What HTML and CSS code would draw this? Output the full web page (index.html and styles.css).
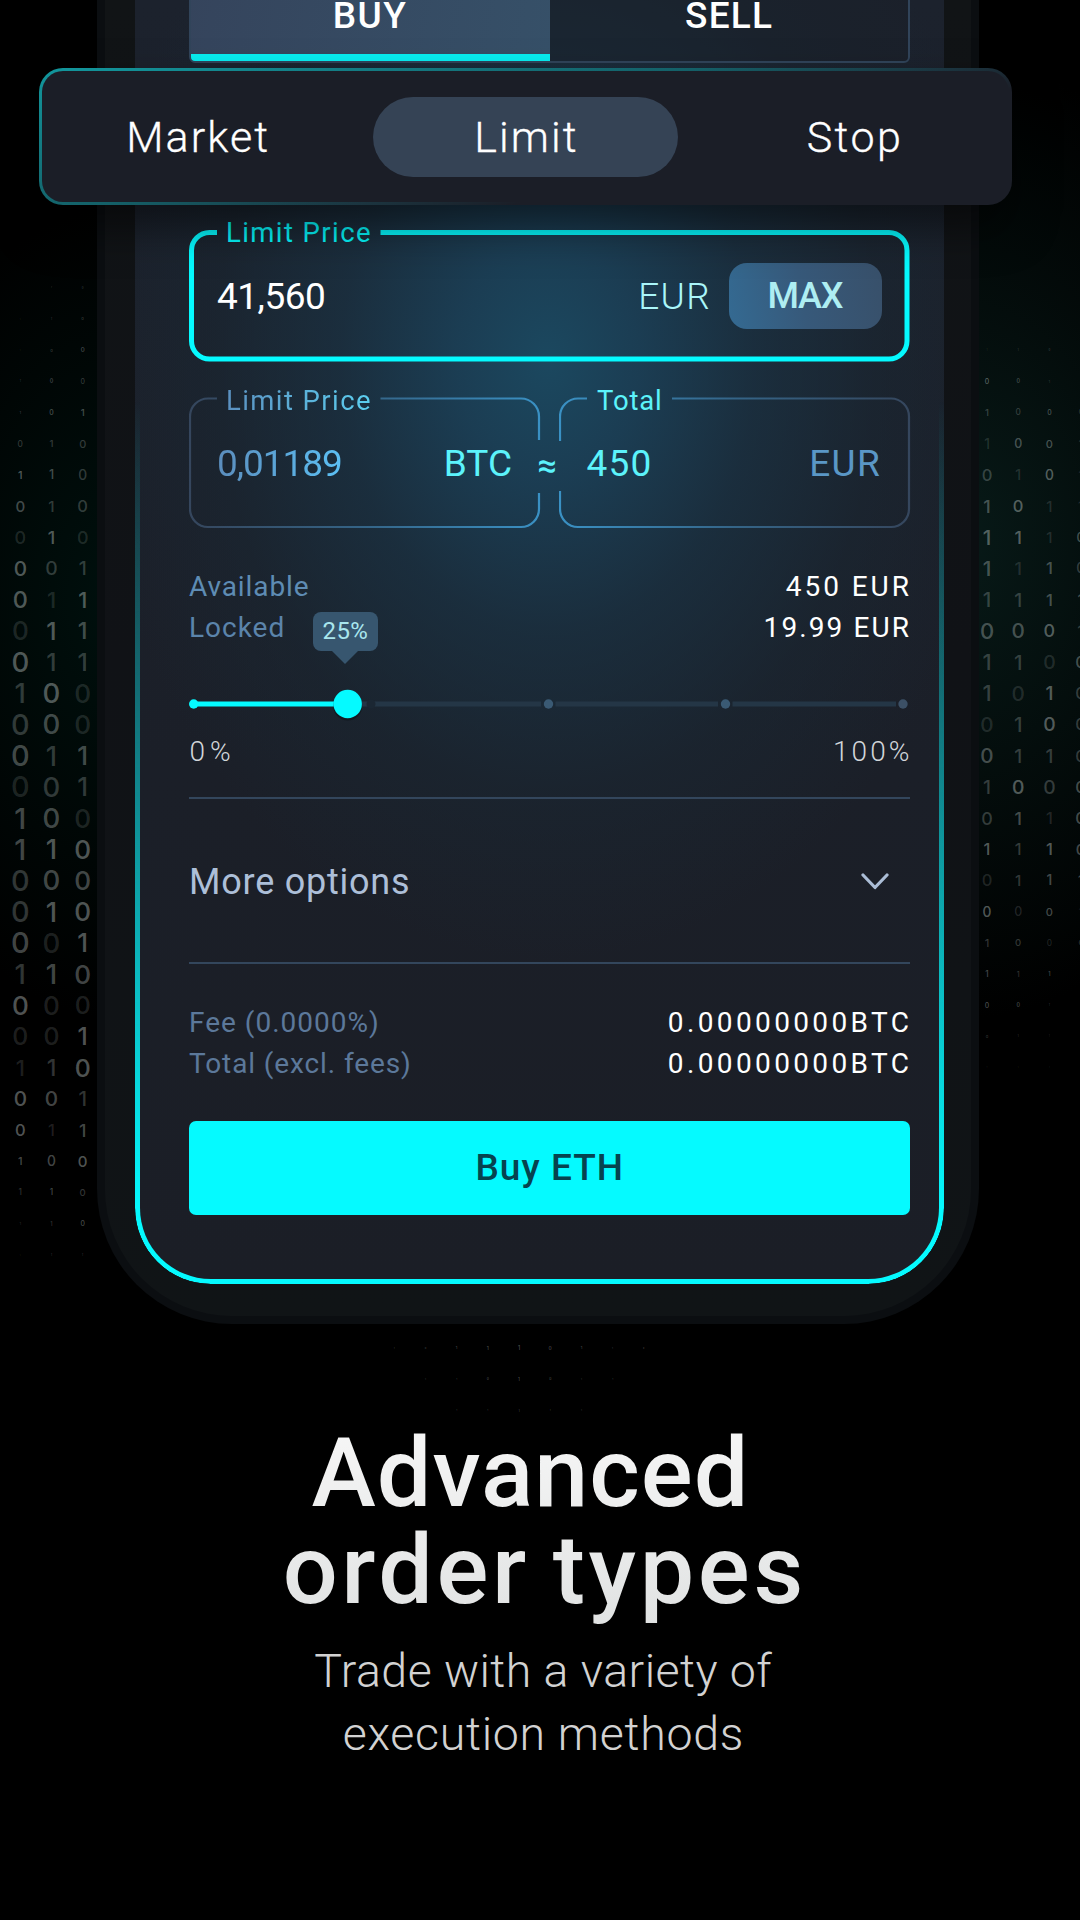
FILE: index.html
```html
<!DOCTYPE html>
<html lang="en">
<head>
<meta charset="utf-8">
<title>Advanced order types</title>
<link rel="stylesheet" href="styles.css">
</head>
<body>
<main class="page">
  <svg class="rain" id="rain" width="1080" height="1920" viewBox="0 0 1080 1920" aria-hidden="true"></svg>

  <section class="phone">
    <div class="bezel">
      <div class="screen">
        <div class="tabs">
          <div class="tab tab-active"><span class="t buy">BUY</span></div>
          <div class="tab"><span class="t sell">SELL</span></div>
        </div>

        <div class="field price">
          <svg class="outline" width="721" height="132" viewBox="0 0 721 132" aria-hidden="true">
            <path d="M28 2.5H20.5A18 18 0 0 0 2.500 20.500V111A18 18 0 0 0 20.500 129H700A18 18 0 0 0 718 111V20.500A18 18 0 0 0 700 2.500H191.500" fill="none" stroke="#05faff" stroke-width="5"/>
          </svg>
          <span class="label t cyan">Limit Price</span>
          <span class="value t white v-price">41,560</span>
          <span class="unit t u-price">EUR</span>
          <button class="max"><span class="t m">MAX</span></button>
        </div>

        <div class="pair">
          <div class="field">
            <svg class="outline" width="352" height="132" viewBox="0 0 352 132" aria-hidden="true">
              <defs><linearGradient id="ga" gradientUnits="userSpaceOnUse" x1="0" y1="0" x2="352" y2="0"><stop offset="0" stop-color="#35465d"/><stop offset=".5" stop-color="#346487"/><stop offset="1" stop-color="#3a91c4"/></linearGradient></defs>
              <path d="M28 1.500H19A18 18 0 0 0 1 19.500V112A18 18 0 0 0 19 130H332A18 18 0 0 0 350 112V96M350 43V19.500A18 18 0 0 0 332 1.500H191.500" fill="none" stroke="url(#ga)" stroke-width="2.200"/>
            </svg>
            <span class="label t fade-label">Limit Price</span>
            <span class="value t fade-value v-amount">0,01189</span>
            <span class="unit t bright btc">BTC</span>
          </div>
          <span class="approx">≈</span>
          <div class="field">
            <svg class="outline" width="352" height="132" viewBox="0 0 352 132" aria-hidden="true">
              <defs><linearGradient id="gb" gradientUnits="userSpaceOnUse" x1="0" y1="0" x2="352" y2="0"><stop offset="0" stop-color="#3a91c4"/><stop offset=".5" stop-color="#346487"/><stop offset="1" stop-color="#35465d"/></linearGradient></defs>
              <path d="M28 1.500H19A18 18 0 0 0 1 19.500V44M1 94V112A18 18 0 0 0 19 130H332A18 18 0 0 0 350 112V19.500A18 18 0 0 0 332 1.500H113" fill="none" stroke="url(#gb)" stroke-width="2.200"/>
            </svg>
            <span class="label t total bright">Total</span>
            <span class="value t bright v-total">450</span>
            <span class="unit t dim eur">EUR</span>
          </div>
        </div>

        <div class="rows balance">
          <div class="row"><span class="t k1">Available</span><span class="t white w1">450 EUR</span></div>
          <div class="row"><span class="t k2">Locked</span><span class="t white w2">19.99 EUR</span></div>
        </div>

        <div class="slider">
          <svg width="721" height="40" viewBox="0 0 721 40" aria-hidden="true">
            <path d="M160 20H352M366.500 20H529M543.500 20H707" stroke="#243646" stroke-width="5"/>
            <circle cx="182" cy="20" r="4.500" fill="#1b2733"/>
            <g fill="#3a5a74"><circle cx="359.500" cy="20" r="4.700"/><circle cx="536.500" cy="20" r="4.700"/><circle cx="714" cy="20" r="4.700" fill="#3c5066"/></g>
            <path d="M4 20H154" stroke="#05faff" stroke-width="5"/>
            <circle cx="4.700" cy="20" r="4.700" fill="#05faff"/>
            <circle cx="158.700" cy="22" r="14.500" fill="#05080c" opacity=".35"/>
            <circle cx="158.700" cy="20" r="14.200" fill="#05faff"/>
          </svg>
          <div class="tip"><span class="t pc">25%</span></div>
        </div>
        <div class="row scale"><span class="t s0">0%</span><span class="t s100">100%</span></div>

        <div class="more">
          <span class="t mo">More options</span>
          <svg width="28" height="17" viewBox="0 0 28 17" aria-hidden="true"><path d="M2 2L14 14.500L26 2" fill="none" stroke="#abbdd6" stroke-width="3.200" stroke-linecap="round" stroke-linejoin="round"/></svg>
        </div>

        <div class="rows fees">
          <div class="row"><span class="t k3">Fee (0.0000%)</span><span class="t white w3">0.00000000BTC</span></div>
          <div class="row"><span class="t k4">Total (excl. fees)</span><span class="t white w3">0.00000000BTC</span></div>
        </div>

        <button class="submit"><span class="t be">Buy ETH</span></button>
      </div>
    </div>
  </section>

  <nav class="types">
    <span class="type"><span class="t market">Market</span></span>
    <span class="type type-active"><span class="t limit">Limit</span></span>
    <span class="type"><span class="t stop">Stop</span></span>
  </nav>

  <header class="caption">
    <h1><span class="t l1">Advanced</span><br><span class="t l2">order types</span></h1>
    <p><span class="t l3">Trade with a variety of</span><br><span class="t l4">execution methods</span></p>
  </header>
</main>
<script src="rain.js"></script>
</body>
</html>
```

FILE: rain.js
```javascript
// Binary rain: each entry is [digits, brightness levels, cap heights] for one row.
const STEP = 31.2;
const TOP = 287.6;

const left = [
  [' 10', '022', [0, 1, 2]], ['110', '122', [1, 2, 3]], ['100', '123', [1, 3, 4.5]],
  ['100', '232', [2, 4, 5]], ['101', '233', [3, 5, 7]], ['010', '222', [6, 7, 8]],
  ['110', '432', [8, 9, 10]], ['010', '322', [11, 11, 12]], ['010', '141', [13, 13, 13]],
  ['001', '422', [15, 14, 14]], ['011', '414', [17, 16, 16]], ['011', '143', [19, 18, 17]],
  ['011', '422', [20, 18, 18]], ['100', '241', [20, 20, 19]], ['000', '231', [21, 20, 19]],
  ['011', '323', [21, 20, 19]], ['001', '122', [21, 20, 19]], ['100', '331', [21, 20, 19]],
  ['110', '344', [21, 20, 19]], ['000', '233', [21, 20, 19]], ['010', '244', [21, 20, 19]],
  ['001', '314', [21, 20, 19]], ['110', '233', [20, 20, 19]], ['000', '411', [19, 19, 18]],
  ['001', '114', [18, 18, 18]], ['110', '124', [16, 17, 18]], ['001', '432', [15, 15, 15]],
  ['011', '413', [12, 12, 13]], ['100', '334', [8, 10, 11]], ['110', '232', [6, 6, 7]],
  ['110', '123', [3, 4, 5]], ['111', '122', [1, 2, 2]]
];

const right = [
  ['    ', '0000', [0, 0, 0, 0]], ['    ', '0000', [0, 0, 0, 0]], ['110 ', '1220', [2, 2, 2, 0]],
  ['001 ', '4310', [5, 4, 3, 0]], ['1000', '2232', [7, 6, 5, 4]], ['1001', '1332', [10, 9, 8, 6]],
  ['0101', '2141', [12, 11, 10, 7]], ['1011', '3411', [13, 12, 11, 9]], ['1110', '4413', [15, 13, 11, 9]],
  ['1110', '3132', [15, 13, 12, 10]], ['1111', '2233', [15, 14, 12, 11]], ['0001', '3342', [16, 15, 13, 12]],
  ['1100', '2213', [16, 15, 14, 12]], ['1010', '2142', [16, 15, 14, 12]], ['0100', '1242', [15, 15, 14, 12]],
  ['0110', '3222', [15, 14, 14, 12]], ['1000', '2423', [14, 14, 14, 12]], ['0110', '2313', [13, 13, 12, 12]],
  ['1110', '4243', [12, 12, 12, 11]], ['0111', '1233', [12, 11, 10, 9]], ['0001', '4131', [10, 9, 8, 6]],
  ['1000', '2213', [8, 7, 6, 4]], ['111 ', '3230', [6, 5, 4, 0]], ['001 ', '3320', [5, 4, 2, 0]],
  ['011 ', '2210', [3, 2, 2, 0]], ['111 ', '1110', [1.5, 1.5, 1.5, 0]]
];

const alpha = [0, 0.14, 0.22, 0.3, 0.36];
const svg = document.getElementById('rain');

function digit(ch, x, y, height, a) {
  const cap = Math.max(1.6, height);
  const t = document.createElementNS('http://www.w3.org/2000/svg', 'text');
  t.setAttribute('x', x.toFixed(1));
  t.setAttribute('y', (y + cap / 2).toFixed(1));
  t.setAttribute('font-size', (cap / 0.727).toFixed(1));
  t.setAttribute('fill-opacity', a);
  t.textContent = ch;
  svg.appendChild(t);
}

function draw(rows, x0) {
  rows.forEach(([chars, levels, caps], r) => {
    [...chars].forEach((ch, c) => {
      if (ch !== ' ') digit(ch, x0 + c * STEP, TOP + r * STEP, caps[c], alpha[levels[c]]);
    });
  });
}

draw(left, 20.3);
draw(right, 987);

// Faint tail below the phone.
[['101110110', 1347.7, 3.8], ['1101011', 1379, 2.8], ['11111', 1410.5, 1.8]].forEach(([s, y, cap]) => {
  const mid = (s.length - 1) / 2;
  [...s].forEach((ch, i) => digit(ch, 519 + (i - mid) * STEP, y, cap * (1.2 - Math.abs(i - mid) / mid), 0.3));
});
```

FILE: styles.css
```css
* { box-sizing: border-box; }
body { margin: 0; background: #000; font-family: Roboto, "Liberation Sans", sans-serif; color: #fff; }
.page {
  position: relative; width: 1080px; height: 1920px; overflow: hidden;
  background:
    radial-gradient(ellipse 260px 420px at 120px 600px, rgba(0,18,15,.9), transparent),
    radial-gradient(ellipse 330px 480px at 960px 540px, rgba(8,27,25,.95), transparent),
    #000;
}
.rain { position: absolute; left: 0; top: 0; font-family: Inter, sans-serif; font-weight: 500; fill: #e4efed; text-anchor: middle; }

/* Tracked text: the trailing space after the last glyph is pulled back. */
.t { display: inline-block; white-space: nowrap; letter-spacing: var(--ls, 0); margin-right: calc(var(--ls, 0px) * -1); }

.phone { position: relative; width: 882px; height: 1323.5px; margin-left: 97px; padding: 0 8px 8px; background: #0b0e11; border-radius: 0 0 135px 135px; }
.bezel { height: 1315.5px; padding: 0 27px 32px 30px; background: linear-gradient(#111416, #101216 50%, #101416); border-radius: 0 0 127px 127px; }
.screen {
  position: relative; width: 809px; height: 1283.5px; padding: 0 34.5px 0 54px; overflow: hidden; border-radius: 0 0 76px 76px;
  background:
    radial-gradient(ellipse 460px 600px at 413px 360px, rgba(27,74,98,.95), rgba(27,66,90,.85) 20%, rgba(26,52,70,.68) 45%, rgba(26,40,52,.5) 72%, rgba(27,31,40,0)),
    linear-gradient(#1c222d, #1b1f28 60%, #1b1e26);
}
.screen::before { content: ""; display: table; }
.screen::after {
  content: ""; position: absolute; inset: 0; border-radius: inherit; padding: 0 5px 5px;
  background: linear-gradient(transparent 400px, rgba(5,250,255,.42) 740px, #05faff 1210px);
  mask: linear-gradient(#000 0 0) content-box, linear-gradient(#000 0 0);
  mask-composite: exclude;
  pointer-events: none;
}

.tabs { display: flex; width: 720.5px; height: 91.5px; margin-top: -29px; border: 2px solid #31445a; border-radius: 6px; overflow: hidden; background: rgba(27,31,40,.45); }
.tab { flex: 1; position: relative; display: flex; align-items: center; justify-content: center; font-size: 37px; font-weight: 500; padding-bottom: 2px; }
.tab-active { background: linear-gradient(100deg, #35445c, #365068); flex: 0 0 360.5px; margin-left: -2px; }
.tab-active::after { content: ""; position: absolute; left: 2px; right: 0; bottom: 0; height: 7px; background: #08eef2; }
.buy { --ls: 1.47px; } .sell { --ls: 1.24px; }

.field { position: relative; height: 131px; display: flex; align-items: center; font-size: 37px; }
.outline { position: absolute; left: 0; top: 0; }
.label { position: absolute; top: -12px; left: 37px; font-size: 27.5px; line-height: 32px; --ls: 1.41px; }
.value, .unit { position: relative; top: 1px; }
.price { margin-top: 167.5px; padding: 0 27.5px 0 28px; }
.price .label { top: -13px; }
.price .value, .price .unit { top: .5px; }
.cyan { color: #05faff; }
.white { color: #fff; }
.v-price { --ls: -.49px; margin-right: auto; }
.u-price { --ls: 1.31px; margin-right: 18px; font-weight: 300; color: #aaf6fa; }
.max { width: 153px; height: 66px; border: 0; padding: 0; border-radius: 18px; background: linear-gradient(80deg, #346a92, #37597a 48%, #38506a); color: #aeeef2; font: 500 36px Roboto, sans-serif; }
.m { --ls: -1.2px; }

.pair { display: flex; gap: 19px; width: 721px; margin-top: 36px; position: relative; }
.pair .field { width: 351px; padding: 0 29px 0 28px; }
.v-amount { --ls: -1.04px; margin-right: auto; }
.btc { --ls: 0px; margin-right: -1px; }
.v-total { --ls: 1.21px; margin-right: auto; left: -.5px; }
.eur { --ls: 1.3px; margin-right: 0; }
.bright { color: #5cf3fb; }
.dim { color: #5a97c6; }
.total { left: 38px; --ls: .82px; }
.fade-label { background: linear-gradient(90deg, #5b90c0, #5ccff0); background-clip: text; -webkit-background-clip: text; color: transparent; }
.fade-value { background: linear-gradient(90deg, #5b8dbd, #5cc0f4); background-clip: text; -webkit-background-clip: text; color: transparent; }
.approx { position: absolute; left: 348px; top: 46px; width: 20px; text-align: center; font: 500 34px/44px Roboto, sans-serif; color: #5cf3fb; }

.row { display: flex; justify-content: space-between; width: 720.5px; font-size: 28px; line-height: 41px; }
.balance { margin-top: 38px; }
.k1 { --ls: .9px; color: #5e8cb4; } .k2 { --ls: 1px; color: #5b84ab; }
.w1 { --ls: 2.96px; } .w2 { --ls: 2.1px; }
.w1, .w2, .w3 { position: relative; left: -.5px; }

.slider { position: relative; margin-top: 36px; height: 40px; }
.slider svg { display: block; }
.tip { position: absolute; left: 124px; top: -72.5px; width: 64.5px; height: 39px; border-radius: 8px; background: #37566f; display: flex; align-items: center; justify-content: center; font-size: 24px; color: #a9e6ee; }
.tip::after { content: ""; position: absolute; left: 18px; top: 38.5px; border: 14px solid transparent; border-top-color: #37566f; border-bottom: 0; }
.pc { --ls: .4px; }
.scale { margin-top: 7px; font-weight: 300; color: #d2d6da; }
.s0 { --ls: 5px; margin-left: .5px; } .s100 { --ls: 3.1px; }

.more { display: flex; align-items: center; justify-content: space-between; width: 720.5px; height: 166.5px; margin-top: 25px; padding: 2.5px 20.5px 0 0; border: solid #33465c; border-width: 2.5px 0; font-size: 36px; color: #adbfd8; }
.mo { --ls: .77px; }

.fees { margin-top: 38.5px; }
.k3 { --ls: 1px; color: #5c789a; } .k4 { --ls: .89px; color: #5c789a; }
.w3 { --ls: 3.38px; }

.submit { display: block; width: 720.5px; height: 94px; margin-top: 36.5px; border: 0; border-radius: 7px; background: #05faff; color: #06434f; font: 500 37px Roboto, sans-serif; padding: 0; }
.be { --ls: 1.07px; }

.types {
  position: absolute; left: 39px; top: 68px; width: 973px; height: 137px; border-radius: 24px; border: 3px solid transparent;
  display: flex; align-items: center; justify-content: center; gap: 23.3px;
  background:
    linear-gradient(#1b1e27, #1b1e27) padding-box,
    linear-gradient(167deg, #12979d, #146068 42%, #1b3540 58%, #1b1e27 68%) border-box;
  box-shadow: 0 22px 44px rgba(0,0,0,.5);
}
.type { width: 305px; height: 80px; flex: none; border-radius: 40px; display: flex; align-items: center; justify-content: center; font-size: 43px; font-weight: 300; -webkit-text-stroke: .3px; }
.type-active { background: #354355; }
.market { --ls: 2.1px; } .limit { --ls: 2.09px; } .stop { --ls: 2.46px; }

.caption { margin: 101px 0 0; padding-left: 6px; text-align: center; }
h1 { margin: 0; padding-bottom: 12px; font-size: 97px; line-height: 97px; font-weight: 500; background: linear-gradient(#f6f6f6, #e0e2e2); background-clip: text; -webkit-background-clip: text; color: transparent; }
p { margin: 9px 0 0; font-size: 46.5px; line-height: 63.3px; font-weight: 300; color: #d2d2d2; }
.l1 { --ls: 1.01px; margin-right: 25px; } .l2 { --ls: 3.6px; word-spacing: -5px; } .l3 { --ls: .45px; } .l4 { --ls: .7px; }
```
